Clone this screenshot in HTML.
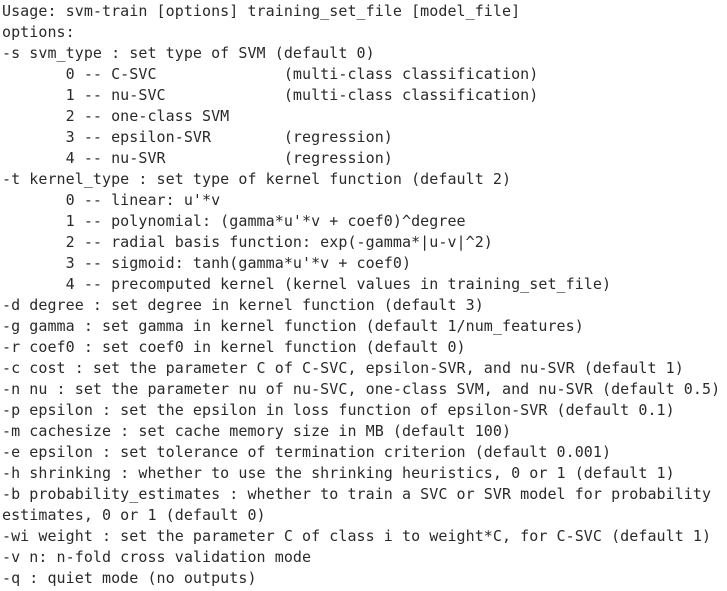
<!DOCTYPE html>
<html><head><meta charset="utf-8"><style>
html,body{margin:0;padding:0;background:#fff;width:727px;height:591px;overflow:hidden}
pre{margin:0;padding:1px 0 0 2px;font-family:"DejaVu Sans Mono",monospace;font-size:15px;letter-spacing:0.06px;line-height:21px;color:#2a2a2a}
</style></head><body><pre>Usage: svm-train [options] training_set_file [model_file]
options:
-s svm_type : set type of SVM (default 0)
       0 -- C-SVC              (multi-class classification)
       1 -- nu-SVC             (multi-class classification)
       2 -- one-class SVM
       3 -- epsilon-SVR        (regression)
       4 -- nu-SVR             (regression)
-t kernel_type : set type of kernel function (default 2)
       0 -- linear: u'*v
       1 -- polynomial: (gamma*u'*v + coef0)^degree
       2 -- radial basis function: exp(-gamma*|u-v|^2)
       3 -- sigmoid: tanh(gamma*u'*v + coef0)
       4 -- precomputed kernel (kernel values in training_set_file)
-d degree : set degree in kernel function (default 3)
-g gamma : set gamma in kernel function (default 1/num_features)
-r coef0 : set coef0 in kernel function (default 0)
-c cost : set the parameter C of C-SVC, epsilon-SVR, and nu-SVR (default 1)
-n nu : set the parameter nu of nu-SVC, one-class SVM, and nu-SVR (default 0.5)
-p epsilon : set the epsilon in loss function of epsilon-SVR (default 0.1)
-m cachesize : set cache memory size in MB (default 100)
-e epsilon : set tolerance of termination criterion (default 0.001)
-h shrinking : whether to use the shrinking heuristics, 0 or 1 (default 1)
-b probability_estimates : whether to train a SVC or SVR model for probability
estimates, 0 or 1 (default 0)
-wi weight : set the parameter C of class i to weight*C, for C-SVC (default 1)
-v n: n-fold cross validation mode
-q : quiet mode (no outputs)
</pre></body></html>
